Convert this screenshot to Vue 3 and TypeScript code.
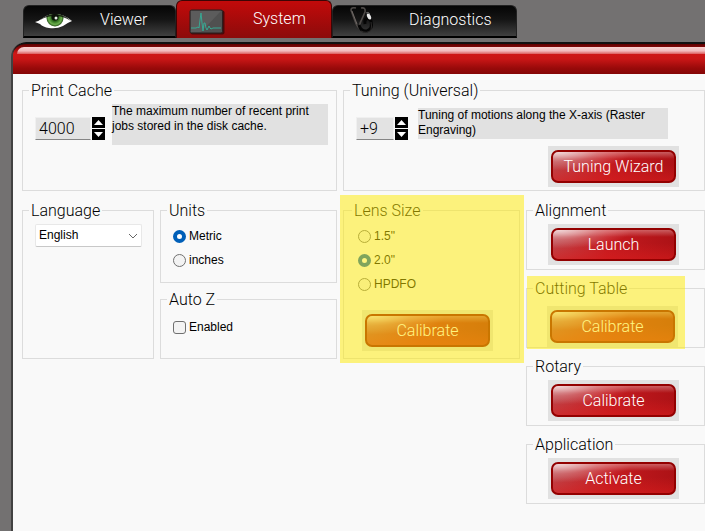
<script setup lang="ts">
import { ref } from 'vue'

const tabs = ['Viewer', 'System', 'Diagnostics']
const activeTab = ref('System')
const cacheSize = ref(4000)
const tuning = ref('+9')
const language = ref('English')
const units = ref('Metric')
const unitOptions = ['Metric', 'inches']
const autoZ = ref(false)
const lens = ref('2.0"')
const lensOptions = ['1.5"', '2.0"', 'HPDFO']
const actions = [
  { title: 'Alignment', label: 'Launch', marked: false },
  { title: 'Cutting Table', label: 'Calibrate', marked: true },
  { title: 'Rotary', label: 'Calibrate', marked: false },
  { title: 'Application', label: 'Activate', marked: false },
]

function stepCache(delta: number) {
  cacheSize.value = Math.max(0, cacheSize.value + delta)
}
function stepTuning(delta: number) {
  const next = Number(tuning.value) + delta
  tuning.value = next > 0 ? `+${next}` : String(next)
}
</script>

<template>
  <div class="page">
    <nav class="tabs">
      <button
        v-for="tab in tabs"
        :key="tab"
        type="button"
        class="tab"
        :class="[tab.toLowerCase(), { active: activeTab === tab }]"
        @click="activeTab = tab"
      >
        <span class="tab-icon">
          <svg v-if="tab === 'Viewer'" width="38" height="22" viewBox="0 0 38 22" aria-hidden="true">
            <defs>
              <radialGradient id="iris">
                <stop offset="0" stop-color="#0a1606" />
                <stop offset="0.4" stop-color="#2b6a1c" />
                <stop offset="0.75" stop-color="#6cb04d" />
                <stop offset="1" stop-color="#234d17" />
              </radialGradient>
              <clipPath id="eye"><path d="M0 13 Q4 12 8 9 Q13 5 20 5 Q29 5 37 12 Q32 14 28 17 Q22 20 14 19 Q8 18 5 15 Z" /></clipPath>
            </defs>
            <path d="M0 13 Q4 12 8 9 Q13 5 20 5 Q29 5 37 12 Q32 14 28 17 Q22 20 14 19 Q8 18 5 15 Z" fill="#fff" />
            <g clip-path="url(#eye)">
              <circle cx="20" cy="9" r="8.500" fill="url(#iris)" />
              <circle cx="20" cy="8" r="3.600" fill="#0b1208" />
              <path d="M5 11 Q12 3 20 3 Q28 3 36 12 Q28 7 20 7 Q12 7 5 11 Z" fill="#0c0f0a" opacity="0.8" />
              <circle cx="21" cy="9" r="1.500" fill="#e8f0e8" />
            </g>
          </svg>
          <svg v-else-if="tab === 'System'" width="36" height="26" viewBox="0 0 36 26" aria-hidden="true">
            <rect x="1.500" y="1.500" width="34" height="24" rx="2" fill="#4a0a0a" />
            <rect x="1" y="1" width="32.500" height="23" rx="1.500" fill="#505050" stroke="#2b2020" />
            <path d="M2 2h30L12 23H2z" fill="#5c5c5c" />
            <path d="M2 19h5l2-1 1 1 1-8 1-7 1 10 1 8 1-8 1 0 1 5 1 2 2-4 1 2 1 1 2-1 2 0h6" fill="none" stroke="#38a893" />
          </svg>
          <svg v-else width="38" height="28" viewBox="0 0 38 28" aria-hidden="true">
            <path d="M12 2q-5 -1-5 2l4 11q2 6 5 8q-1-5 1-8l4-9q1-5-4-4" fill="none" stroke="#4e4a48" stroke-width="1.600" />
            <path d="M8 5l5 13" stroke="#958c86" stroke-width="0.600" />
            <path d="M15 19q2 7 8 6q6-2 4-10l-3-3q-4 1-3 6" fill="none" stroke="#050505" stroke-width="3" />
            <path d="M17 25q6 3 10-1q1-4 0-8" fill="none" stroke="#3c3938" stroke-width="0.700" />
            <ellipse cx="25" cy="10.500" rx="1.800" ry="3.200" transform="rotate(-25 25 10.5)" fill="#e8e8e8" />
            <path d="M22 7q2-2 4 1" fill="none" stroke="#666" />
          </svg>
        </span>
        {{ tab }}
      </button>
    </nav>

    <main class="panel">
      <div class="banner"></div>
      <div class="settings">
        <fieldset class="group wide">
          <legend>Print Cache</legend>
          <div class="row">
            <div class="spinner">
              <input v-model.number="cacheSize" class="cache" type="text" aria-label="Print Cache" />
              <span class="steps">
                <button type="button" aria-label="Increase" @click="stepCache(1)">
                  <svg width="13" height="11" viewBox="0 0 13 11"><path d="M6.500 3L11 8H2z" fill="#fff" /></svg>
                </button>
                <button type="button" aria-label="Decrease" @click="stepCache(-1)">
                  <svg width="13" height="11" viewBox="0 0 13 11"><path d="M6.500 8L11 3H2z" fill="#fff" /></svg>
                </button>
              </span>
            </div>
            <p class="note tall">The maximum number of recent print jobs stored in the disk cache.</p>
          </div>
        </fieldset>

        <fieldset class="group wide">
          <legend>Tuning (Universal)</legend>
          <div class="row">
            <div class="spinner">
              <input v-model="tuning" class="tune" type="text" aria-label="Tuning" />
              <span class="steps">
                <button type="button" aria-label="Increase" @click="stepTuning(1)">
                  <svg width="13" height="11" viewBox="0 0 13 11"><path d="M6.500 3L11 8H2z" fill="#fff" /></svg>
                </button>
                <button type="button" aria-label="Decrease" @click="stepTuning(-1)">
                  <svg width="13" height="11" viewBox="0 0 13 11"><path d="M6.500 8L11 3H2z" fill="#fff" /></svg>
                </button>
              </span>
            </div>
            <p class="note short">Tuning of motions along the X-axis (Raster Engraving)</p>
          </div>
          <div class="plate wizard"><button type="button" class="action">Tuning Wizard</button></div>
        </fieldset>

        <fieldset class="group column">
          <legend>Language</legend>
          <div class="picker">
            <select v-model="language" aria-label="Language">
              <option>English</option>
            </select>
            <svg class="chevron" width="10" height="6" viewBox="0 0 10 6"><path d="M1 1l4 4 4-4" fill="none" stroke="#666" /></svg>
          </div>
        </fieldset>

        <div class="stack">
          <fieldset class="group units">
            <legend>Units</legend>
            <label v-for="option in unitOptions" :key="option" class="choice">
              <input v-model="units" type="radio" name="units" :value="option" />{{ option }}
            </label>
          </fieldset>
          <fieldset class="group auto">
            <legend>Auto Z</legend>
            <label class="choice"><input v-model="autoZ" type="checkbox" />Enabled</label>
          </fieldset>
        </div>

        <div class="marked lens">
          <fieldset class="group column">
            <legend>Lens Size</legend>
            <label v-for="option in lensOptions" :key="option" class="choice">
              <input v-model="lens" type="radio" name="lens" :value="option" />{{ option }}
            </label>
            <div class="plate"><button type="button" class="action">Calibrate</button></div>
          </fieldset>
        </div>

        <div class="stack">
          <div v-for="item in actions" :key="item.title" :class="{ 'marked table': item.marked }">
            <fieldset class="group single">
              <legend>{{ item.title }}</legend>
              <div class="plate"><button type="button" class="action">{{ item.label }}</button></div>
            </fieldset>
          </div>
        </div>
      </div>
    </main>
  </div>
</template>

<style>
body {
  margin: 0;
  background: #737171;
}
</style>

<style scoped>
* {
  box-sizing: border-box;
}
.page {
  display: flex;
  flex-direction: column;
  min-height: 100vh;
  background: #737171;
  color: #000;
  font: 12px/15px "Liberation Sans", Arial, sans-serif;
}
button,
input,
select {
  margin: 0;
  font: inherit;
  color: inherit;
}
.tab,
.action,
legend,
.spinner input {
  font-family: Roboto, "Liberation Sans", sans-serif;
  font-size: 16px;
  font-weight: 300;
}
.tabs {
  display: flex;
  align-items: flex-end;
  padding-left: 23px;
  height: 38px;
  margin-bottom: 4px;
}
.tab {
  display: flex;
  align-items: center;
  gap: 27px;
  height: 33px;
  padding: 0 0 2px 11px;
  border: 1px solid #222;
  border-bottom: 2px solid #000;
  border-radius: 6px 6px 0 0;
  background: linear-gradient(#050505, #151515 45%, #404040);
  color: #fff;
  line-height: 20px;
}
.tab-icon {
  display: flex;
  align-items: center;
  justify-content: center;
  width: 38px;
  height: 28px;
}
.viewer {
  width: 153px;
}
.diagnostics {
  width: 185px;
}
.tab.active {
  width: 156px;
  height: 38px;
  border: 1px solid #3c0505;
  border-bottom: 0;
  background: linear-gradient(#c20a0a, #8c0b0b);
}
.active .tab-icon {
  align-items: flex-end;
  height: 32px;
}
.panel {
  flex: 1;
  margin-left: 11px;
  border-left: 2px solid #414141;
  border-radius: 15px 0 0 0;
  background: #f9f9f9;
}
.banner {
  height: 32px;
  padding: 3px 0 0 4px;
  border-top: 2px solid #111;
  border-radius: 13px 0 0 0;
  background: linear-gradient(#5c0000, #cf1717 30%, #c91616 50%, #990a0a 80%, #840606);
}
.banner::before {
  content: "";
  display: block;
  height: 7px;
  border-radius: 10px 0 0 0;
  background: linear-gradient(#f9d3d3, #f3bcbe 55%, #dc5c5c);
}
.settings {
  display: grid;
  grid-template-columns: 132fr 177fr 177fr 179fr;
  align-items: start;
  gap: 9px 6px;
  padding: 6px 0 16px 9px;
}
.group {
  min-width: 0;
  margin: 0;
  padding: 4px 8px 4px 12px;
  border: 1px solid #dcdcdc;
}
legend {
  height: 20px;
  margin-left: -6px;
  padding: 0 2px;
  line-height: 22px;
  white-space: nowrap;
}
.wide {
  grid-column: span 2;
  height: 111px;
}
.column {
  min-height: 159px;
}
.row {
  display: flex;
  align-items: flex-start;
}
.spinner {
  display: flex;
  gap: 1px;
  margin-top: 13px;
}
.spinner input {
  height: 23px;
  padding: 0 3px;
  border: 1px solid #f0f0f0;
  border-bottom: 1px solid #858585;
  background: #e3e3e3;
}
.cache {
  width: 56px;
}
.tune {
  width: 38px;
}
.steps {
  display: grid;
  gap: 1px;
}
.steps button {
  display: flex;
  width: 13px;
  height: 11px;
  padding: 0;
  border: 0;
  background: #000;
}
.note {
  flex: 1;
  margin: 0;
  background: #e1e1e1;
}
.note.tall {
  min-height: 41px;
  margin-left: 7px;
}
.note.short {
  max-width: 250px;
  min-height: 31px;
  margin: 4px 0 0 10px;
}
.plate {
  width: 131px;
  height: 41px;
  padding: 4px 3px;
  margin-left: 9px;
  background: #e1e1e1;
}
.wizard {
  margin: 6px 17px 0 auto;
}
.action {
  display: block;
  width: 100%;
  height: 33px;
  padding: 0 0 1px;
  border: 2px solid #930000;
  border-radius: 7px;
  background:
    radial-gradient(ellipse at 4% 0, #ffffffb0, #ffffff38 24%, #ffffff00 45%),
    linear-gradient(#ffffff50, #ffffff00 24%),
    linear-gradient(#ffffff00 45%, #d81c1c90),
    linear-gradient(90deg, #bd454a, #c51b20 45%, #ad1216);
  color: #fff;
}
.picker {
  position: relative;
  width: 107px;
}
.picker select {
  display: block;
  width: 100%;
  height: 23px;
  padding: 0 3px;
  border: 1px solid #e8e8e8;
  border-bottom-color: #c8c8c8;
  border-radius: 2px;
  background: #fff;
  appearance: none;
}
.chevron {
  position: absolute;
  top: 9px;
  right: 4px;
  pointer-events: none;
}
.stack {
  display: grid;
  gap: 8px;
}
.units {
  height: 83px;
  margin-bottom: -2px;
}
.auto {
  height: 70px;
}
.choice {
  display: flex;
  align-items: center;
  gap: 3px;
  height: 24px;
}
.auto .choice {
  margin-top: 2px;
}
.choice input {
  width: 13px;
  height: 13px;
  border: 1px solid #707070;
  border-radius: 50%;
  background: #f3f3f3;
  appearance: none;
}
.choice input[type="checkbox"] {
  border-radius: 3px;
}
.choice input[type="radio"]:checked {
  border: 4px solid #005fb8;
  background: #fff;
}
.choice input[type="checkbox"]:checked {
  background: #005fb8;
}
.single {
  height: 70px;
}
.lens .group {
  padding-left: 14px;
}
.lens .plate {
  margin: 14px 0 0 4px;
}
.table .group {
  padding-top: 8px;
}
.table .plate {
  margin-left: 8px;
}
.marked {
  position: relative;
}
.marked::after {
  content: "";
  position: absolute;
  background: #ffec0080;
  pointer-events: none;
}
.lens::after {
  inset: -5px -4px -4px -3px;
}
.table::after {
  inset: -2px 20px -1px 1px;
}
</style>
